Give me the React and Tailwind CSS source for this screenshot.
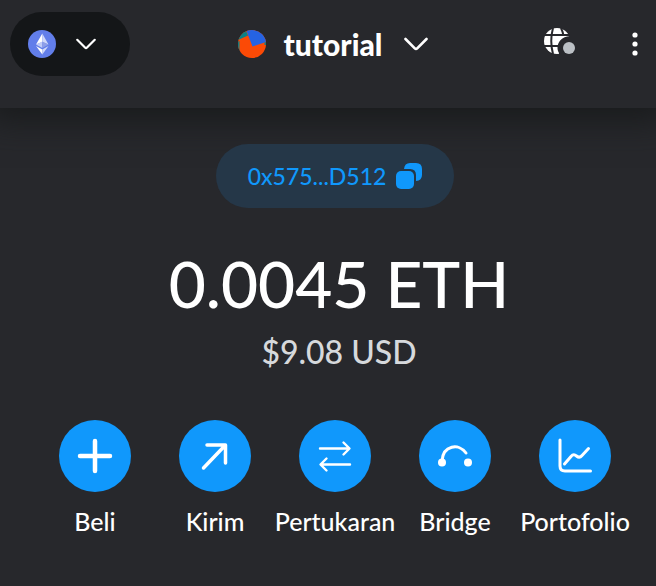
const ChevronIcon = ({ className }) => (
  <svg viewBox="0 0 24 14" className={className} fill="none" stroke="currentColor" strokeWidth="2.6" strokeLinecap="round" strokeLinejoin="round">
    <path d="M1.5 2 L10.8 11.3 Q12 12.5 13.2 11.3 L22.5 2" />
  </svg>
);

const EthereumLogo = () => (
  <svg viewBox="0 0 28 28" className="size-7">
    <circle cx="14" cy="14" r="14" fill="#627eea" />
    <path d="M14.3 3.5 L8 14.5 L14.3 12 Z" fill="#fff" />
    <path d="M14.3 3.5 L20.5 14.5 L14.3 12 Z" fill="#d0d8f9" />
    <path d="M8 14.5 L14.3 11.5 V18 Z" fill="#c0cbf7" />
    <path d="M20.5 14.5 L14.3 11.5 V18 Z" fill="#8e9fe8" />
    <path d="M8 16 L14.3 19.5 V24.5 Z" fill="#fff" />
    <path d="M20.5 16 L14.3 19.5 V24.5 Z" fill="#d0d8f9" />
  </svg>
);

const AccountAvatar = () => (
  <svg viewBox="0 0 28 28" className="size-7">
    <clipPath id="avatar">
      <circle cx="14" cy="14" r="14" />
    </clipPath>
    <g clipPath="url(#avatar)">
      <rect width="28" height="28" fill="#fb4a06" />
      <path d="M8 -1 H28 V12 L14.500 16.500 L10 5 Z" fill="#2563e3" />
      <path d="M0 0 H8 L8.500 2 L10 5.500 L0 10 Z" fill="#0b7f86" />
      <path d="M0 11.500 L1.500 11 V21 H0 Z" fill="#0b7f86" />
      <path d="M26.500 12.400 L28 12 V15 H26.500 Z" fill="#0b7f86" />
    </g>
  </svg>
);

const ConnectedSitesIcon = () => (
  <svg viewBox="0 0 32 28" className="h-7 w-8">
    <circle cx="13" cy="13" r="13" fill="#fff" />
    <g fill="none" stroke="#27282c" strokeWidth="2">
      <path d="M0 7 H26 M0 18 H26" />
      <path d="M9 0 Q5.500 13 9 26 M17 0 Q19 4 19.500 8" />
    </g>
    <path d="M15 30 V25 C11 19 15 8.500 26 8 H32 V30 Z" fill="#27282c" />
    <circle cx="25" cy="20" r="6" fill="#bbc0c5" />
  </svg>
);

const MoreIcon = () => (
  <svg viewBox="0 0 6 24" className="h-6 w-1.5" fill="#fff">
    <circle cx="3" cy="3" r="2.6" />
    <circle cx="3" cy="12" r="2.6" />
    <circle cx="3" cy="21" r="2.6" />
  </svg>
);

const CopyIcon = () => (
  <svg viewBox="0 0 26 26" className="size-[26px]" fill="currentColor">
    <rect x="0" y="8" width="18" height="18" rx="5" />
    <path d="M8 6 Q8.500 0 14 0 H20 Q26 0 26 6 V12 Q26 17.500 20 18 V12 Q20 6 14 6 Z" />
  </svg>
);

const actions = [
  {
    label: "Beli",
    icon: <path d="M20 5 V35 M5 20 H35" strokeWidth="4.500" />,
  },
  {
    label: "Kirim",
    icon: <path d="M8.500 32 L30 9.500 M12 9 H30.500 V27" strokeWidth="3.500" />,
  },
  {
    label: "Pertukaran",
    icon: <path d="M5 12.500 H34 M28.500 6.500 L34.500 12.500 L28.500 18.500 M35 28.500 H6 M11.500 22.500 L5.500 28.500 L11.500 34.500" strokeWidth="2.400" />,
  },
  {
    label: "Bridge",
    icon: (
      <>
        <path d="M7 25 C8 9 24 7 31 17" strokeWidth="3" />
        <circle cx="7" cy="26.500" r="4" fill="#fff" stroke="none" />
        <circle cx="33" cy="26.500" r="4" fill="#fff" stroke="none" />
      </>
    ),
  },
  {
    label: "Portofolio",
    icon: (
      <>
        <path d="M5 4 V30 Q5 35 10 35 H35.500" strokeWidth="3" />
        <path d="M9.500 28 L16 20.500 Q18.500 17.500 21.500 20 T27 19.500 L33.500 12.500" strokeWidth="3" />
      </>
    ),
  },
];

const Header = () => (
  <header className="grid h-[108px] grid-cols-[1fr_auto_1fr] items-start bg-[#27282c] pt-3 pl-2.5 shadow-[0_0_32px_12px_#191b1c]">
    <button aria-label="Network" className="flex h-16 w-[120px] items-center gap-5 rounded-full bg-[#141618] pl-[18px]">
      <EthereumLogo />
      <ChevronIcon className="h-3 w-5" />
    </button>
    <button className="flex h-16 items-center text-[30px] font-black">
      <AccountAvatar />
      <span className="mr-[22px] ml-[18px]">tutorial</span>
      <ChevronIcon className="h-4 w-6" />
    </button>
    <div className="flex h-16 items-center justify-end gap-14 pr-[18px]">
      <button aria-label="Connected sites" className="pb-1">
        <ConnectedSitesIcon />
      </button>
      <button aria-label="Account options">
        <MoreIcon />
      </button>
    </div>
  </header>
);

const App = () => (
  <div className="min-h-screen overflow-hidden bg-[#27282c] font-['Lato','Open_Sans',sans-serif] text-white">
    <Header />
    <main className="flex flex-col items-center pt-9 pl-3.5">
      <button className="relative flex h-16 items-center gap-2.5 rounded-full bg-[#253748] px-8 text-[23px] font-medium text-[#1098fc]">
        0x575...D512
        <CopyIcon />
      </button>
      <div className="mt-9 flex gap-4 pl-2 text-[64px] leading-[80px] font-medium">
        <span>0.0045</span>
        <span>ETH</span>
      </div>
      <p className="mt-2 pl-2 text-[32px] leading-[40px] font-medium text-[#d6d9dc]">$9.08 USD</p>
      <div className="mt-12 grid grid-cols-[repeat(5,120px)]">
        {actions.map(({ label, icon }) => (
          <button key={label} className="flex flex-col items-center gap-4">
            <span className="flex size-[72px] items-center justify-center rounded-full bg-[#1098fc]">
              <svg viewBox="0 0 40 40" className="size-10" fill="none" stroke="#fff" strokeLinecap="round" strokeLinejoin="round">
                {icon}
              </svg>
            </span>
            <span className="text-[25px] leading-[26px] font-medium whitespace-nowrap">{label}</span>
          </button>
        ))}
      </div>
    </main>
  </div>
);

export default App;
